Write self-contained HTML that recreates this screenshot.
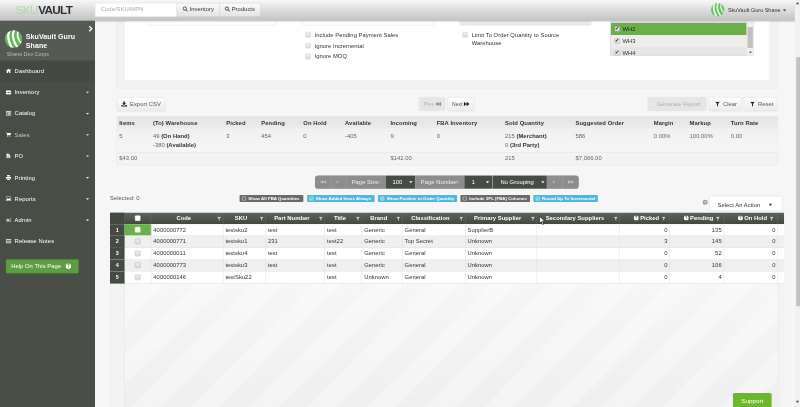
<!DOCTYPE html>
<html><head><meta charset="utf-8"><title>SkuVault</title>
<style>
html,body{margin:0;padding:0;width:800px;height:407px;overflow:hidden;background:#f6f6f6;}
#s{position:absolute;left:0;top:0;width:1920px;height:977px;transform:scale(0.416667);transform-origin:0 0;font-family:"Liberation Sans",Arial,sans-serif;font-size:14px;color:#333;background:#f6f6f6;overflow:hidden;filter:opacity(1);letter-spacing:.08px;}
#s *{box-sizing:border-box;}
.a{position:absolute;}
.t{position:absolute;white-space:nowrap;line-height:20px;}
.b{font-weight:bold;}
/* header */
#hd{left:0;top:0;width:1908px;height:50px;background:linear-gradient(#f7f7f7,#dedede 45%,#c2c2c2);}
/* sidebar */
#sb{left:0;top:50px;width:228px;height:927px;background:#484e46;}
.mi{position:absolute;left:0;width:227px;height:51px;border-top:1px solid #525850;border-bottom:1px solid #41463f;color:#fff;}
.mi .t{left:35px;top:14px;letter-spacing:.25px;}
.mi svg{position:absolute;left:13px;top:17px;transform:scale(.88);}
.car{position:absolute;left:206px;top:23px;width:0;height:0;border-left:4px solid transparent;border-right:4px solid transparent;border-top:4px solid #e8e8e8;}
/* buttons */
.btn{position:absolute;height:33px;border:1px solid #dcdcdc;border-radius:3px;background:linear-gradient(#fdfdfd,#ececec);box-shadow:0 1px 1px rgba(0,0,0,.08);color:#444;}
.btn.dis{background:#e6e6e6;color:#aaa;border-color:#e0e0e0;box-shadow:none;}
.cb{position:absolute;width:13px;height:13px;border:1px solid #a2a2a2;border-radius:2px;background:linear-gradient(#f1f1f1,#d8d8d8);}
/* summary table */
.sh{top:285px;font-weight:bold;color:#333;letter-spacing:.2px;}
.sd{top:316px;color:#666;}
/* pager */
.pg{position:absolute;top:0;height:32px;color:#fff;}
.pl{background:#8d8d8d;color:#ececec;}
.pd{background:#474d45;}
/* tags */
.tag{position:absolute;top:468px;height:17px;border-radius:2px;color:#fff;font-size:10.4px;font-weight:bold;line-height:17px;white-space:nowrap;padding-left:21px;}
.tag i{position:absolute;left:6px;top:4px;width:9px;height:9px;border:1px solid #fff;border-radius:1px;}
.tc i::after{content:"";position:absolute;left:2px;top:-1.5px;width:3px;height:6px;border:solid #fff;border-width:0 1.6px 1.6px 0;transform:rotate(45deg);}
.tg{background:#6a6a6a;}
.tc{background:#4fb9dd;}
/* grid */
.gh{position:absolute;top:0;height:28px;color:#fff;font-weight:bold;text-align:center;line-height:27px;border-right:1px solid #6a7166;}
.gr{position:absolute;left:0;width:1618px;height:28.4px;border-bottom:1px solid #dcdcdc;}
.gc{position:absolute;top:0;height:100%;border-right:1px solid #dcdcdc;line-height:27px;padding:0 5px;white-space:nowrap;color:#333;}
.num{text-align:right;}
.fi{position:absolute;right:4px;top:10px;}
.qi{display:inline-block;vertical-align:-1px;margin-right:3px;}
.rn{position:absolute;left:0;width:35px;height:28.4px;background:#454b43;color:#fff;font-weight:bold;font-size:13px;text-align:center;line-height:27px;border-bottom:1px solid #3a3f38;}
</style></head><body>
<div id="s">

<!-- page background panels -->
<div class="a" style="left:279px;top:40px;width:1588px;height:172px;background:#f2f2f2;border:1px solid #e3e3e3;"></div>
<div class="a" id="wp" style="left:298px;top:40px;width:1550px;height:154px;background:#fff;border:1px solid #e6e6e6;"></div>

<!-- form remnants -->
<div class="a" style="left:351px;top:30px;width:312px;height:31px;background:#fff;border:1px solid #dedede;border-radius:3px;"></div>
<div class="a" style="left:726px;top:30px;width:316px;height:31px;background:#fff;border:1px solid #dedede;border-radius:3px;"></div>
<div class="a" style="left:1103px;top:30px;width:316px;height:31px;background:#ebebeb;border:1px solid #dedede;border-radius:3px;"></div>

<div class="cb" style="left:733px;top:77px;border-color:#bdbdbd;"></div><div class="t" style="left:755px;top:73px;">Include Pending Payment Sales</div>
<div class="cb" style="left:733px;top:103px;border-color:#bdbdbd;"></div><div class="t" style="left:755px;top:99px;">Ignore Incremental</div>
<div class="cb" style="left:733px;top:129px;border-color:#bdbdbd;"></div><div class="t" style="left:755px;top:125px;">Ignore MOQ</div>
<div class="cb" style="left:1110px;top:77px;border-color:#bdbdbd;"></div><div class="t" style="left:1132px;top:73px;">Limit To Order Quantity to Source</div><div class="t" style="left:1132px;top:94px;">Warehouse</div>

<!-- warehouse list -->
<div class="a" id="wh" style="left:1465px;top:40px;width:343px;height:94px;background:#e9e9e9;border:1px solid #c9c9c9;overflow:hidden;">
  <div class="a" style="left:0;top:14px;width:326px;height:29px;background:#69b04a;"></div>
  <div class="a" style="left:0;top:43px;width:326px;height:29px;background:#efecec;"></div>
  <div class="a" style="left:0;top:72px;width:326px;height:29px;background:#e6e6e6;"></div>
  <div class="t" style="left:28px;top:19px;color:#222;">WH2</div>
  <div class="t" style="left:28px;top:48px;">WH3</div>
  <div class="t" style="left:28px;top:77px;">WH4</div>
  <div class="cb" style="left:9px;top:22px;"></div><div class="cb" style="left:9px;top:51px;"></div><div class="cb" style="left:9px;top:80px;"></div>
  <div class="t" style="left:10px;top:17px;font-size:12px;color:#222;">✔</div><div class="t" style="left:10px;top:46px;font-size:12px;color:#222;">✔</div><div class="t" style="left:10px;top:75px;font-size:12px;color:#222;">✔</div>
  <div class="a" style="left:326px;top:0;width:17px;height:94px;background:#f1f1f1;"></div>
  <div class="a" style="left:328px;top:24px;width:13px;height:50px;background:#c1c1c1;"></div>
  <div class="a" style="left:331px;top:83px;width:0;height:0;border-left:4px solid transparent;border-right:4px solid transparent;border-top:4px solid #444;"></div>
</div>

<!-- header -->
<div class="a" id="hd"></div>
<div class="a" style="left:0;top:50px;width:1908px;height:5px;background:linear-gradient(rgba(0,0,0,.14),rgba(0,0,0,0));"></div>
<div class="t" style="left:37px;top:8px;font-size:28px;line-height:32px;letter-spacing:-1.2px;"><span style="color:#addaa6;">SKU</span><span style="color:#2b2e35;font-weight:bold;letter-spacing:-1.6px;margin-left:1px;">VAULT</span></div>
<div class="a" style="left:228px;top:7px;width:197px;height:33px;background:#fff;border:1px solid #e0e0e0;"></div>
<div class="t" style="left:242px;top:12px;color:#aaa;">Code/SKU/MPN</div>
<div class="a" style="left:424px;top:7px;width:104px;height:33px;background:linear-gradient(#fbfbfb,#e3e3e3);border:1px solid #d6d6d6;"></div>
<div class="a" style="left:527px;top:7px;width:99px;height:33px;background:linear-gradient(#fbfbfb,#e3e3e3);border:1px solid #d6d6d6;border-radius:0 3px 3px 0;"></div>
<svg class="a" style="left:438px;top:15px;" width="14" height="14" viewBox="0 0 14 14"><circle cx="5.5" cy="5.5" r="4" fill="none" stroke="#333" stroke-width="2"/><path d="M8.5 8.5L13 13" stroke="#333" stroke-width="2.2"/></svg>
<div class="t" style="left:455px;top:12px;color:#333;">Inventory</div>
<svg class="a" style="left:539px;top:15px;" width="14" height="14" viewBox="0 0 14 14"><circle cx="5.5" cy="5.5" r="4" fill="none" stroke="#333" stroke-width="2"/><path d="M8.5 8.5L13 13" stroke="#333" stroke-width="2.2"/></svg>
<div class="t" style="left:556px;top:12px;color:#333;">Products</div>
<!-- user -->
<svg class="a" style="left:1706px;top:7px;" width="33" height="33" viewBox="0 0 43 43"><defs><clipPath id="cp2"><circle cx="21.5" cy="21.5" r="21"/></clipPath></defs><circle cx="21.5" cy="21.5" r="21" fill="#6abf62"/><g clip-path="url(#cp2)" fill="none" stroke="#eaf7e6" stroke-linecap="round"><path d="M13 -2 Q2 20 20 46" stroke-width="5.5"/><path d="M24 -2 Q13 18 33 44" stroke-width="5"/><path d="M34 0 Q26 14 40 32" stroke-width="4"/></g></svg>
<div class="t" style="left:1747px;top:14px;font-size:13px;color:#333;">SkuVault Guru Shane</div>
<div class="a" style="left:1879px;top:23px;width:0;height:0;border-left:4px solid transparent;border-right:4px solid transparent;border-top:4px solid #333;"></div>

<!-- sidebar -->
<div class="a" id="sb">
  <div class="a" style="left:0;top:0;width:227px;height:95px;background:#555b53;"></div>
  <svg class="a" style="left:212px;top:11px;" width="11" height="16" viewBox="0 0 11 16"><path d="M2 2L8.5 8L2 14" fill="none" stroke="#fff" stroke-width="3"/></svg>
  <svg class="a" style="left:11px;top:22px;" width="43" height="43" viewBox="0 0 43 43"><defs><clipPath id="cp"><circle cx="21.5" cy="21.5" r="21"/></clipPath></defs><circle cx="21.5" cy="21.5" r="21" fill="#63b75a"/><g clip-path="url(#cp)" fill="none" stroke="#fff" stroke-linecap="round"><path d="M13 -2 Q2 20 20 46" stroke-width="5.5"/><path d="M24 -2 Q13 18 33 44" stroke-width="5"/><path d="M34 0 Q26 14 40 32" stroke-width="4"/></g></svg>
  <div class="t b" style="left:62px;top:26.5px;font-size:17px;line-height:21px;color:#fff;">SkuVault Guru</div>
  <div class="t b" style="left:62px;top:47.5px;font-size:17px;line-height:21px;color:#fff;">Shane</div>
  <div class="t" style="left:16px;top:70px;font-size:12.7px;color:#b9bdb7;">Shane Dev Corps</div>

  <div class="mi" style="top:95.0px;background:#444a42;"><svg width="15" height="14" viewBox="0 0 15 14"><path d="M7.5 1L0.5 7.5H2.5V13H6V9H9V13H12.5V7.5H14.5Z M11 1.5h1.8v3.2L11 3.2Z" fill="#fff"/></svg><div class="t">Dashboard</div></div>
  <div class="mi" style="top:146.1px;"><svg width="15" height="14" viewBox="0 0 15 14"><path d="M5 1h5a1 1 0 0 1 1 1v1.5h3a1 1 0 0 1 1 1V7H0V4.500a1 1 0 0 1 1-1h3V2a1 1 0 0 1 1-1Zm.5 1.300v1.200h4V2.300ZM0 8h6v1.300h3V8h6v4.500a1 1 0 0 1-1 1H1a1 1 0 0 1-1-1Z" fill="#fff"/></svg><div class="t">Inventory</div><div class="car"></div></div>
  <div class="mi" style="top:197.2px;"><svg width="15" height="14" viewBox="0 0 15 14"><path d="M0 1h15v12H0Z M1.500 4.300v7.200h12V4.300Z M2.800 5.500h2v1.300h-2Zm3.200 0h6.300v1.300H6ZM2.800 7.700h2V9h-2ZM6 7.700h6.300V9H6ZM2.800 9.800h2v1.300h-2Zm3.200 0h6.300v1.300H6Z" fill="#fff" fill-rule="evenodd"/></svg><div class="t">Catalog</div><div class="car"></div></div>
  <div class="mi" style="top:248.3px;"><svg width="15" height="14" viewBox="0 0 15 14"><path d="M0 1h2.600l.5 1.500H14.500l-1.500 5.500H5l.3 1.300H13V10.500H4.200L2 2.200H0Z" fill="#fff"/><circle cx="5.500" cy="12.200" r="1.300" fill="#fff"/><circle cx="11.500" cy="12.200" r="1.300" fill="#fff"/></svg><div class="t" style="color:#c9ccc7;">Sales</div><div class="car"></div></div>
  <div class="mi" style="top:299.4px;"><svg width="15" height="14" viewBox="0 0 15 14"><path d="M2 0.500h6v4h4v9H2Z M9 0.500l3 3H9Z M3.800 6.500h6.400v1H3.800Zm0 2h6.400v1H3.800Zm0 2h6.400v1H3.800Z" fill="#fff" fill-rule="evenodd"/></svg><div class="t">PO</div><div class="car"></div></div>
  <div class="mi" style="top:350.5px;"><svg width="15" height="14" viewBox="0 0 15 14"><path d="M3.500 0.500h8v4h-8Z M0.500 5.500h14a.8.8 0 0 1 .5.800V11h-2.500V8.500h-10V11H0V6.300a.8.800 0 0 1 .5-.8Z M3.500 9.500h8v4h-8Z" fill="#fff"/></svg><div class="t">Printing</div><div class="car"></div></div>
  <div class="mi" style="top:401.6px;"><svg width="15" height="14" viewBox="0 0 15 14"><path d="M0 1h15v12H0Z M1.500 2.500v9h12v-9Z M3 10.500V8l2.500-2.500 2.500 2.500 2-3 2.500 3v2.500Z" fill="#fff" fill-rule="evenodd"/></svg><div class="t">Reports</div><div class="car"></div></div>
  <div class="mi" style="top:452.7px;"><svg width="16" height="14" viewBox="0 0 16 14"><circle cx="5.500" cy="8" r="3.200" fill="none" stroke="#fff" stroke-width="2.600" stroke-dasharray="1.900 1.200"/><circle cx="5.500" cy="8" r="2.400" fill="none" stroke="#fff" stroke-width="1.800"/><circle cx="12.500" cy="3.500" r="1.900" fill="none" stroke="#fff" stroke-width="1.800" stroke-dasharray="1.300 .8"/><circle cx="12.500" cy="11" r="1.900" fill="none" stroke="#fff" stroke-width="1.800" stroke-dasharray="1.300 .8"/></svg><div class="t">Admin</div><div class="car"></div></div>
  <div class="mi" style="top:503.8px;"><svg width="15" height="14" viewBox="0 0 15 14"><path d="M0 1.500h15v11H0Z M1.300 4.500v2h12.400v-2Z m0 3v1.500h12.400v-1.500Z m0 2.500v1.300h12.400V10Z" fill="#fff" fill-rule="evenodd"/></svg><div class="t">Release Notes</div></div>
  <div class="a" style="left:0;top:555px;width:227px;height:68px;border-top:1px solid #525850;border-bottom:1px solid #41463f;"></div>
  <div class="a" style="left:0;top:623px;width:227px;height:1px;background:#525850;"></div>
  <div class="a" style="left:14px;top:572px;width:175px;height:34px;background:#5b9e41;border-radius:3px;border:1px solid #51903a;"></div>
  <div class="t" style="left:27px;top:579px;color:#fff;">Help On This Page</div>
  <svg class="a" style="left:157px;top:582px;" width="14" height="14" viewBox="0 0 14 14"><circle cx="7" cy="7" r="6.500" fill="#fff"/><text x="7" y="11" font-size="11" font-weight="bold" text-anchor="middle" fill="#5b9e41" font-family="Liberation Sans,sans-serif">?</text></svg>
</div>

<!-- action buttons row -->
<div class="btn" style="left:280px;top:233px;width:117px;"></div>
<svg class="a" style="left:291px;top:243px;" width="14" height="13" viewBox="0 0 14 13"><path d="M5 0h4v4.500h3L7 9.500 2 4.500h3Z M0 9h3.500l2 2h3l2-2H14v4H0Z" fill="#333"/></svg>
<div class="t" style="left:312px;top:239px;color:#555;">Export CSV</div>

<div class="btn dis" style="left:1005px;top:233px;width:64px;"></div>
<div class="t" style="left:1017px;top:240px;font-size:12px;color:#b5b5b5;">Prev</div>
<svg class="a" style="left:1045px;top:244px;" width="14" height="11" viewBox="0 0 14 11"><path d="M7 0v11L0 5.500Z M14 0v11L7 5.500Z" fill="#8a8a8a"/></svg>
<div class="btn" style="left:1074px;top:233px;width:64px;"></div>
<div class="t" style="left:1085px;top:240px;font-size:12px;color:#555;">Next</div>
<svg class="a" style="left:1113px;top:244px;" width="14" height="11" viewBox="0 0 14 11"><path d="M0 0v11L7 5.500Z M7 0v11L14 5.500Z" fill="#222"/></svg>

<div class="btn dis" style="left:1554px;top:233px;width:142px;"></div>
<div class="t" style="left:1576px;top:239px;color:#b0b0b0;">Generate Report</div>
<div class="btn" style="left:1701px;top:233px;width:79px;"></div>
<svg class="a" style="left:1716px;top:244px;" width="12" height="12" viewBox="0 0 12 12"><path d="M0 0h12L7.300 5v7L4.700 10V5Z" fill="#222"/></svg>
<div class="t" style="left:1735px;top:239px;color:#555;">Clear</div>
<div class="btn" style="left:1785px;top:233px;width:81px;"></div>
<svg class="a" style="left:1800px;top:244px;" width="12" height="12" viewBox="0 0 12 12"><path d="M0 0h12L7.300 5v7L4.700 10V5Z" fill="#222"/></svg>
<div class="t" style="left:1819px;top:239px;color:#555;">Reset</div>

<!-- summary table -->
<div class="a" style="left:280px;top:279px;width:1587px;height:117px;background:#f3f3f3;border:1px solid #dedede;border-radius:3px;"></div>
<div class="a" style="left:281px;top:280px;width:1585px;height:29px;background:linear-gradient(#e3e3e3,#ececec);"></div>
<div class="a" style="left:281px;top:309px;width:1585px;height:56px;background:linear-gradient(#f0f0f0,#f6f6f6);"></div>
<div class="a" style="left:281px;top:365px;width:1585px;height:1px;background:#e2e2e2;"></div>
<div class="t sh" style="left:286px;">Items</div>
<div class="t sh" style="left:367px;">(To) Warehouse</div>
<div class="t sh" style="left:543px;">Picked</div>
<div class="t sh" style="left:627px;">Pending</div>
<div class="t sh" style="left:728px;">On Hold</div>
<div class="t sh" style="left:828px;">Available</div>
<div class="t sh" style="left:937px;">Incoming</div>
<div class="t sh" style="left:1048px;">FBA Inventory</div>
<div class="t sh" style="left:1212px;">Sold Quantity</div>
<div class="t sh" style="left:1381px;">Suggested Order</div>
<div class="t sh" style="left:1569px;">Margin</div>
<div class="t sh" style="left:1655px;">Markup</div>
<div class="t sh" style="left:1754px;">Turn Rate</div>
<div class="t sd" style="left:286px;">5</div>
<div class="t sd" style="left:367px;">49 <b style="color:#333">(On Hand)</b></div>
<div class="t sd" style="left:367px;top:337px;">-380 <b style="color:#333">(Available)</b></div>
<div class="t sd" style="left:543px;">3</div>
<div class="t sd" style="left:627px;">454</div>
<div class="t sd" style="left:728px;">0</div>
<div class="t sd" style="left:828px;">-405</div>
<div class="t sd" style="left:937px;">9</div>
<div class="t sd" style="left:1048px;">0</div>
<div class="t sd" style="left:1212px;">215 <b style="color:#333">(Merchant)</b></div>
<div class="t sd" style="left:1212px;top:337px;">0 <b style="color:#333">(3rd Party)</b></div>
<div class="t sd" style="left:1381px;">586</div>
<div class="t sd" style="left:1569px;">0.00%</div>
<div class="t sd" style="left:1655px;">100.00%</div>
<div class="t sd" style="left:1754px;">0.00</div>
<div class="t sd" style="left:286px;top:368px;">$43.00</div>
<div class="t sd" style="left:937px;top:368px;">$142.00</div>
<div class="t sd" style="left:1212px;top:368px;">215</div>
<div class="t sd" style="left:1381px;top:368px;">$7,066.00</div>

<!-- pager -->
<div class="a" id="pgr" style="left:756px;top:421px;width:633px;height:32px;border-radius:8px;overflow:hidden;background:#a2a2a2;">
  <div class="pg pl" style="left:0;width:38px;"></div>
  <div class="pg pl" style="left:39px;width:35px;"></div>
  <div class="pg pl" style="left:75px;width:94px;"><div class="t" style="left:13px;top:6px;">Page Size:</div></div>
  <div class="pg pd" style="left:170px;width:70px;"><div class="t" style="left:16px;top:6px;">100</div></div>
  <div class="pg pl" style="left:241px;width:118px;"><div class="t" style="left:13px;top:6px;">Page Number:</div></div>
  <div class="pg pd" style="left:359px;width:66px;"><div class="t" style="left:17px;top:6px;">1</div></div>
  <div class="pg pd" style="left:427px;width:129px;"><div class="t" style="left:18px;top:6px;">No Grouping</div></div>
  <div class="pg pl" style="left:557px;width:37px;"></div>
  <div class="pg pl" style="left:595px;width:38px;"></div>
  <div class="t" style="left:13px;top:6px;font-size:10px;color:#c6c6c6;letter-spacing:-2px;">◀◀</div>
  <div class="t" style="left:51px;top:5px;font-size:13px;color:#c6c6c6;letter-spacing:-3px;">‹‹</div>
  <div class="t" style="left:570px;top:5px;font-size:13px;color:#c6c6c6;letter-spacing:-3px;">››</div>
  <div class="t" style="left:608px;top:6px;font-size:10px;color:#c6c6c6;letter-spacing:-2px;">▶▶</div>
  <div class="a" style="left:226px;top:14px;border-left:4px solid transparent;border-right:4px solid transparent;border-top:5px solid #fff;"></div>
  <div class="a" style="left:410px;top:14px;border-left:4px solid transparent;border-right:4px solid transparent;border-top:5px solid #fff;"></div>
  <div class="a" style="left:543px;top:14px;border-left:4px solid transparent;border-right:4px solid transparent;border-top:5px solid #fff;"></div>
</div>

<!-- selected + tags -->
<div class="t" style="left:264px;top:465px;color:#555;">Selected: 0</div>
<div class="tag tg" style="left:575px;width:153px;"><i></i>Show All FBA Quantities</div>
<div class="tag tc" style="left:737px;width:162px;"><i></i>Show Added Items Always</div>
<div class="tag tc" style="left:907px;width:190px;"><i></i>Show Positive to Order Quantity</div>
<div class="tag tg" style="left:1105px;width:167px;"><i></i>Include 3PL (FBA) Columns</div>
<div class="tag tc" style="left:1280px;width:155px;"><i></i>Round Up To Incremental</div>

<!-- select an action -->
<svg class="a" style="left:1686px;top:479px;" width="13" height="13" viewBox="0 0 13 13"><circle cx="6.500" cy="6.500" r="6" fill="#9a9a9a"/><text x="6.500" y="10.300" font-size="10" font-weight="bold" text-anchor="middle" fill="#f4f4f4" font-family="Liberation Sans,sans-serif">?</text></svg>
<div class="a" style="left:1702px;top:470px;width:176px;height:36px;background:#fff;border:1px solid #dcdcdc;border-radius:4px;"></div>
<div class="t" style="left:1722px;top:481px;color:#333;">Select An Action</div>
<div class="a" style="left:1845px;top:489px;border-left:4px solid transparent;border-right:4px solid transparent;border-top:6px solid #444;"></div>

<!-- grid -->
<div class="a" id="grid" style="left:264px;top:510px;width:1618px;height:467px;background:#f4f4f4;overflow:hidden;">
  <div class="a" style="left:0;top:28px;width:1618px;height:439px;background:repeating-linear-gradient(135deg,rgba(255,255,255,0) 0,rgba(255,255,255,0) 42px,rgba(255,255,255,.32) 50px,rgba(255,255,255,.32) 92px,rgba(255,255,255,0) 100px),linear-gradient(#fafafa,#efefef);"></div>
  <div class="a" style="left:0;top:28px;width:35px;height:439px;background:#f3f3f3;border-right:1px solid #dcdcdc;border-left:1px solid #e4e4e4;"></div>
  <div class="a" style="left:1603px;top:28px;width:15px;height:439px;background:#f3f3f3;border-left:1px solid #e2e2e2;"></div>
  <!-- header -->
  <div class="a" id="ghd" style="left:0;top:0;width:1618px;height:28px;background:linear-gradient(#5d6459,#434940);">
    <div class="gh" style="left:0;width:35px;background:#434940;"></div>
    <div class="gh" style="left:35px;width:64px;"><div class="cb" style="left:25px;top:7px;background:#fff;border-color:#fff;"></div></div>
    <div class="gh" style="left:99px;width:173px;padding-right:16px;">Code<svg class="fi" width="10" height="10" viewBox="0 0 12 12"><path d="M0 0h12L7.300 5v7L4.700 10V5Z" fill="#d9dcd6"/></svg></div>
    <div class="gh" style="left:272px;width:102px;padding-right:16px;">SKU<svg class="fi" width="10" height="10" viewBox="0 0 12 12"><path d="M0 0h12L7.300 5v7L4.700 10V5Z" fill="#d9dcd6"/></svg></div>
    <div class="gh" style="left:374px;width:142px;padding-right:16px;">Part Number<svg class="fi" width="10" height="10" viewBox="0 0 12 12"><path d="M0 0h12L7.300 5v7L4.700 10V5Z" fill="#d9dcd6"/></svg></div>
    <div class="gh" style="left:516px;width:89px;padding-right:16px;">Title<svg class="fi" width="10" height="10" viewBox="0 0 12 12"><path d="M0 0h12L7.300 5v7L4.700 10V5Z" fill="#d9dcd6"/></svg></div>
    <div class="gh" style="left:605px;width:97px;padding-right:16px;">Brand<svg class="fi" width="10" height="10" viewBox="0 0 12 12"><path d="M0 0h12L7.300 5v7L4.700 10V5Z" fill="#d9dcd6"/></svg></div>
    <div class="gh" style="left:702px;width:151px;padding-right:16px;">Classification<svg class="fi" width="10" height="10" viewBox="0 0 12 12"><path d="M0 0h12L7.300 5v7L4.700 10V5Z" fill="#d9dcd6"/></svg></div>
    <div class="gh" style="left:853px;width:172px;padding-right:16px;">Primary Supplier<svg class="fi" width="10" height="10" viewBox="0 0 12 12"><path d="M0 0h12L7.300 5v7L4.700 10V5Z" fill="#d9dcd6"/></svg></div>
    <div class="gh" style="left:1025px;width:199px;padding-right:16px;">Secondary Suppliers<svg class="fi" width="10" height="10" viewBox="0 0 12 12"><path d="M0 0h12L7.300 5v7L4.700 10V5Z" fill="#d9dcd6"/></svg></div>
    <div class="gh" style="left:1224px;width:120px;text-align:right;padding-right:25px;"><svg class="qi" width="12" height="12" viewBox="0 0 13 13"><circle cx="6.500" cy="6.500" r="6.500" fill="#fff"/><text x="6.500" y="10.500" font-size="10.500" font-weight="bold" text-anchor="middle" fill="#4a5047" font-family="Liberation Sans,sans-serif">?</text></svg>Picked<svg class="fi" style="right:9px" width="10" height="10" viewBox="0 0 12 12"><path d="M0 0h12L7.300 5v7L4.700 10V5Z" fill="#d9dcd6"/></svg></div>
    <div class="gh" style="left:1344px;width:130px;text-align:right;padding-right:25px;"><svg class="qi" width="12" height="12" viewBox="0 0 13 13"><circle cx="6.500" cy="6.500" r="6.500" fill="#fff"/><text x="6.500" y="10.500" font-size="10.500" font-weight="bold" text-anchor="middle" fill="#4a5047" font-family="Liberation Sans,sans-serif">?</text></svg>Pending<svg class="fi" style="right:9px" width="10" height="10" viewBox="0 0 12 12"><path d="M0 0h12L7.300 5v7L4.700 10V5Z" fill="#d9dcd6"/></svg></div>
    <div class="gh" style="left:1474px;width:129px;text-align:right;padding-right:25px;"><svg class="qi" width="12" height="12" viewBox="0 0 13 13"><circle cx="6.500" cy="6.500" r="6.500" fill="#fff"/><text x="6.500" y="10.500" font-size="10.500" font-weight="bold" text-anchor="middle" fill="#4a5047" font-family="Liberation Sans,sans-serif">?</text></svg>On Hold<svg class="fi" style="right:9px" width="10" height="10" viewBox="0 0 12 12"><path d="M0 0h12L7.300 5v7L4.700 10V5Z" fill="#d9dcd6"/></svg></div>
  </div>
  <!-- rows -->
  <div id="rows" class="a" style="left:0;top:28px;width:1618px;">
<div class="gr" style="top:0.0px;background:#fff;">
<div class="rn" style="top:0;">1</div>
<div class="gc" style="left:35px;width:64px;background:#6ab04c;"><div class="cb" style="left:25px;top:7px;background:#fff;border-color:#fff;"></div></div>
<div class="gc" style="left:99px;width:173px;">4000000772</div>
<div class="gc" style="left:272px;width:102px;">testsku2</div>
<div class="gc" style="left:374px;width:142px;">test</div>
<div class="gc" style="left:516px;width:89px;">test</div>
<div class="gc" style="left:605px;width:97px;">Generic</div>
<div class="gc" style="left:702px;width:151px;">General</div>
<div class="gc" style="left:853px;width:172px;">SupplierB</div>
<div class="gc" style="left:1025px;width:199px;"></div>
<div class="gc num" style="left:1224px;width:120px;">0</div>
<div class="gc num" style="left:1344px;width:130px;">135</div>
<div class="gc num" style="left:1474px;width:129px;">0</div>
</div>
<div class="gr" style="top:28.4px;background:#efefef;">
<div class="rn" style="top:0;">2</div>
<div class="gc" style="left:35px;width:64px;"><div class="cb" style="left:25px;top:7px;"></div></div>
<div class="gc" style="left:99px;width:173px;">4000000771</div>
<div class="gc" style="left:272px;width:102px;">testsku1</div>
<div class="gc" style="left:374px;width:142px;">231</div>
<div class="gc" style="left:516px;width:89px;">test22</div>
<div class="gc" style="left:605px;width:97px;">Generic</div>
<div class="gc" style="left:702px;width:151px;">Top Secret</div>
<div class="gc" style="left:853px;width:172px;">Unknown</div>
<div class="gc" style="left:1025px;width:199px;"></div>
<div class="gc num" style="left:1224px;width:120px;">3</div>
<div class="gc num" style="left:1344px;width:130px;">145</div>
<div class="gc num" style="left:1474px;width:129px;">0</div>
</div>
<div class="gr" style="top:56.8px;background:#fff;">
<div class="rn" style="top:0;">3</div>
<div class="gc" style="left:35px;width:64px;"><div class="cb" style="left:25px;top:7px;"></div></div>
<div class="gc" style="left:99px;width:173px;">4000000011</div>
<div class="gc" style="left:272px;width:102px;">testsku4</div>
<div class="gc" style="left:374px;width:142px;">test</div>
<div class="gc" style="left:516px;width:89px;">test</div>
<div class="gc" style="left:605px;width:97px;">Generic</div>
<div class="gc" style="left:702px;width:151px;">General</div>
<div class="gc" style="left:853px;width:172px;">Unknown</div>
<div class="gc" style="left:1025px;width:199px;"></div>
<div class="gc num" style="left:1224px;width:120px;">0</div>
<div class="gc num" style="left:1344px;width:130px;">52</div>
<div class="gc num" style="left:1474px;width:129px;">0</div>
</div>
<div class="gr" style="top:85.2px;background:#efefef;">
<div class="rn" style="top:0;">4</div>
<div class="gc" style="left:35px;width:64px;"><div class="cb" style="left:25px;top:7px;"></div></div>
<div class="gc" style="left:99px;width:173px;">4000000773</div>
<div class="gc" style="left:272px;width:102px;">testsku3</div>
<div class="gc" style="left:374px;width:142px;">test</div>
<div class="gc" style="left:516px;width:89px;">test</div>
<div class="gc" style="left:605px;width:97px;">Generic</div>
<div class="gc" style="left:702px;width:151px;">General</div>
<div class="gc" style="left:853px;width:172px;">Unknown</div>
<div class="gc" style="left:1025px;width:199px;"></div>
<div class="gc num" style="left:1224px;width:120px;">0</div>
<div class="gc num" style="left:1344px;width:130px;">106</div>
<div class="gc num" style="left:1474px;width:129px;">0</div>
</div>
<div class="gr" style="top:113.6px;background:#fff;">
<div class="rn" style="top:0;">5</div>
<div class="gc" style="left:35px;width:64px;"><div class="cb" style="left:25px;top:7px;"></div></div>
<div class="gc" style="left:99px;width:173px;">4000000146</div>
<div class="gc" style="left:272px;width:102px;">testSku22</div>
<div class="gc" style="left:374px;width:142px;"></div>
<div class="gc" style="left:516px;width:89px;">test</div>
<div class="gc" style="left:605px;width:97px;">Unknown</div>
<div class="gc" style="left:702px;width:151px;">General</div>
<div class="gc" style="left:853px;width:172px;">Unknown</div>
<div class="gc" style="left:1025px;width:199px;"></div>
<div class="gc num" style="left:1224px;width:120px;">0</div>
<div class="gc num" style="left:1344px;width:130px;">4</div>
<div class="gc num" style="left:1474px;width:129px;">0</div>
</div>
</div>
</div>

<!-- support -->
<div class="a" style="left:1759px;top:943px;width:93px;height:40px;background:#6cb72c;border-radius:4px 4px 0 0;"></div>
<div class="t" style="left:1779px;top:952px;color:#fff;font-size:15px;">Support</div>

<!-- page scrollbar -->
<div class="a" style="left:1908px;top:0;width:12px;height:977px;background:#f1f1f1;"></div>
<div class="a" style="left:1910px;top:5px;border-left:4px solid transparent;border-right:4px solid transparent;border-bottom:5px solid #555;"></div>
<div class="a" style="left:1910px;top:962px;border-left:4px solid transparent;border-right:4px solid transparent;border-top:5px solid #555;"></div>
<svg class="a" style="left:1294px;top:518px;" width="14" height="22" viewBox="0 0 14 22"><path d="M1 1v17l4-4 3 7 3-1.300-3-6.700h5.500Z" fill="#fff" stroke="#111" stroke-width="1.500"/></svg>
<div class="a" style="left:1911px;top:137px;width:9px;height:598px;background:#c1c1c1;"></div>

</div>
</body></html>
